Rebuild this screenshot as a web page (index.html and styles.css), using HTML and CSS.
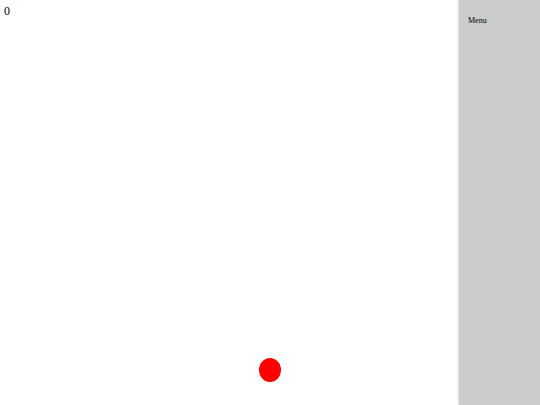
FILE: index.html
```html
<!DOCTYPE html>
<html>
<head>
<meta charset="utf-8">
<link rel="stylesheet" href="styles.css">
</head>
<body>
<div class="app">
  <div class="field">
    <div class="score">0</div>
    <div class="ball"></div>
  </div>
  <div class="sidebar">
    <div class="menu">Menu</div>
  </div>
</div>
</body>
</html>
```
FILE: styles.css
```css
html, body {
  margin: 0;
  padding: 0;
  height: 100%;
  background: #fff;
  font-family: "Liberation Serif", serif;
}
.app {
  display: flex;
  height: 405px;
  width: 540px;
}
.field {
  flex: 1;
  position: relative;
}
.score {
  font-size: 12px;
  padding: 4px 0 0 4px;
  line-height: 14px;
}
.ball {
  position: absolute;
  left: 259px;
  top: 358px;
  width: 22px;
  height: 24px;
  border-radius: 50%;
  background: #ff0000;
}
.sidebar {
  width: 81px;
  background: #cccccc;
  box-shadow: -1px 0 2px rgba(0,0,0,0.15);
}
.menu {
  font-size: 8px;
  padding: 16px 0 0 9px;
  line-height: 10px;
}
```
